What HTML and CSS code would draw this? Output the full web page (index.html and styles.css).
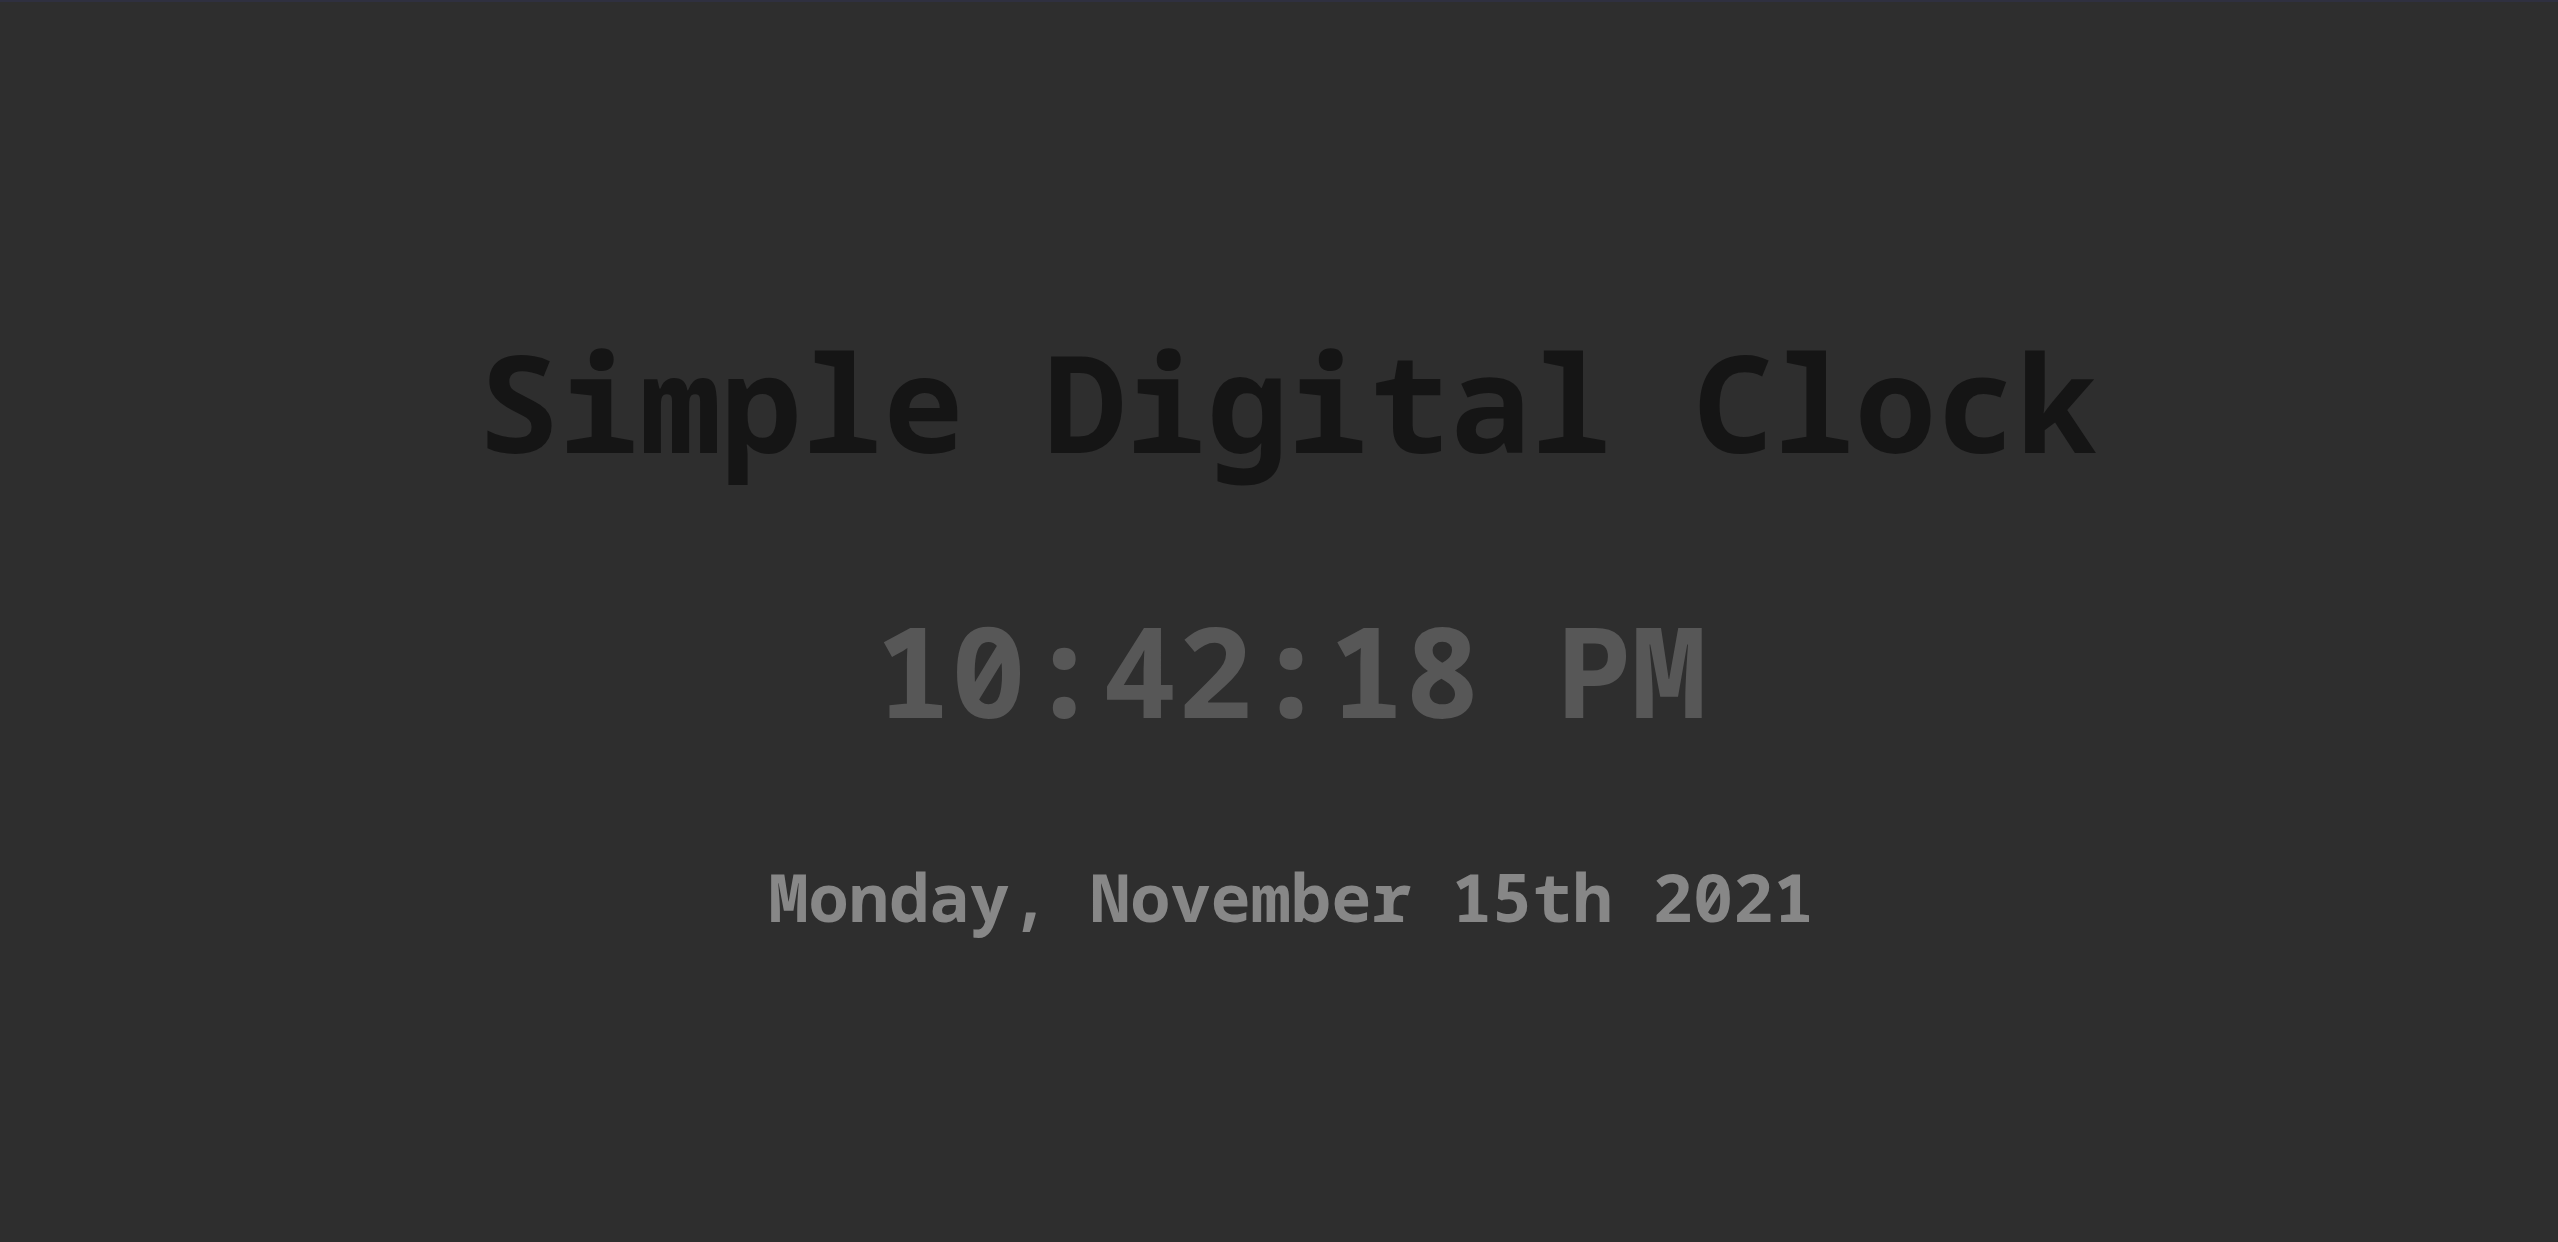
FILE: index.html
```html
<!DOCTYPE html>
<html lang="en">
<head>
<meta charset="utf-8">
<title>Simple Digital Clock</title>
<link rel="stylesheet" href="styles.css">
</head>
<body>
<main class="clock-page">
  <h1 class="title">Simple Digital Clock</h1>
  <div class="time">10:42:18 PM</div>
  <div class="date">Monday, November 15th 2021</div>
</main>
</body>
</html>
```

FILE: styles.css
```css
html, body {
  margin: 0;
  padding: 0;
  height: 100%;
}

body {
  background: #2e2e2e;
  font-family: "Noto Sans Mono", "DejaVu Sans Mono", monospace;
  font-weight: bold;
  border-top: 2px solid #2f3040;
  box-sizing: border-box;
  overflow: hidden;
}

.clock-page {
  display: flex;
  flex-direction: column;
  align-items: center;
  padding-top: 332px;
  padding-left: 24px;
}

.title {
  margin: 0 6px 0 0;
  font-size: 135px;
  line-height: 1;
  font-weight: bold;
  color: #151515;
  white-space: nowrap;
}

.time {
  margin-top: 137px;
  font-size: 126px;
  line-height: 1;
  color: #575757;
  white-space: nowrap;
}

.date {
  margin-top: 131px;
  font-size: 67px;
  line-height: 1;
  color: #878787;
  white-space: nowrap;
}
```
